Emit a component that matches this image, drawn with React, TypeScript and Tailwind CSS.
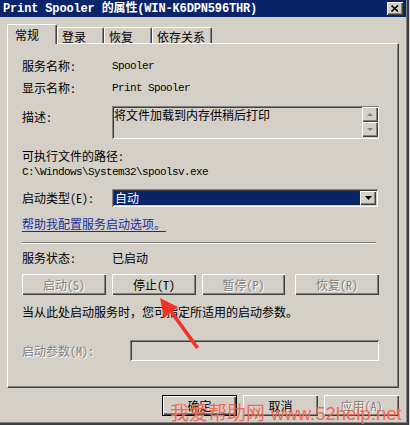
import React from 'react';

const raised = 'bg-[#d4d0c8] shadow-[inset_1px_1px_#fff,inset_-1px_-1px_#404040,inset_-2px_-2px_#808080]';
const sunken = 'shadow-[inset_1px_1px_#808080,inset_-1px_-1px_#fff,inset_2px_2px_#404040,inset_-2px_-2px_#d4d0c8]';
const dim = 'text-[#808080] [text-shadow:1px_1px_0_#fff]';

function Btn({ label, w, disabled, def }: { label: string; w: string; disabled?: boolean; def?: boolean }) {
  return (
    <div
      className={`${w} h-[21px] flex items-center justify-center leading-[16px] ${raised} ${
        def ? 'border border-black' : ''
      } ${disabled ? dim : 'text-black'}`}
    >
      {label}
    </div>
  );
}

function Tab({ label, w, active }: { label: string; w: string; active?: boolean }) {
  return (
    <div
      className={`${w} bg-[#d4d0c8] border-l border-t border-white border-r border-r-[#404040] rounded-t-[2px] shadow-[inset_-1px_0_#808080] leading-[16px] ${
        active ? 'h-[20px] -mb-[1px] relative z-10 pl-[7px] pt-[2px]' : 'h-[16px] pl-[4px] pt-[1px]'
      }`}
    >
      {label}
    </div>
  );
}

export default function App() {
  return (
    <div className="w-[410px] h-[425px] bg-[#d4d0c8] relative overflow-hidden flex text-[12px] text-black font-['Noto_Sans_Mono_CJK_SC','Liberation_Mono','Noto_Sans_CJK_SC',monospace]">
      <div className="w-[409px] h-[425px] flex flex-col border-r-2 border-r-[#404040] border-b-2 border-b-[#404040] shadow-[inset_-1px_-1px_#808080]">
        {/* title bar */}
        <div className="h-[17px] mr-[1px] bg-[#0a246a] flex items-center pl-[3px]">
          <span className="text-white font-bold text-[12px] tracking-[-0.15px] font-['Liberation_Mono','Noto_Sans_CJK_SC',monospace] leading-[16px]">
            Print Spooler 的属性(WIN-K6DPN596THR)
          </span>
          <div className={`ml-auto mr-[3px] w-[16px] h-[13px] flex items-center justify-center ${raised}`}>
            <svg width="8" height="7" viewBox="0 0 8 7">
              <path d="M0.5 0.5 L7 6.5 M7 0.5 L0.5 6.5" stroke="#000" strokeWidth="1.6" />
            </svg>
          </div>
        </div>

        {/* tabs */}
        <div className="h-[26px] flex items-end pl-[7px]">
          <Tab label="常规" w="w-[50px]" active />
          <Tab label="登录" w="w-[47px]" />
          <Tab label="恢复" w="w-[48px]" />
          <Tab label="依存关系" w="w-[60px]" />
        </div>

        {/* panel */}
        <div className="ml-[7px] w-[392px] h-[345px] border border-white border-r-[#404040] border-b-[#404040] shadow-[inset_-1px_-1px_#808080] pl-[14px] pt-[14px] flex flex-col leading-[16px]">
          <div className="flex h-[16px]">
            <div className="w-[90px]">服务名称:</div>
            <div className="text-[11px] tracking-[-0.6px] font-['Liberation_Mono',monospace]">Spooler</div>
          </div>
          <div className="flex h-[16px] mt-[6px]">
            <div className="w-[90px]">显示名称:</div>
            <div className="text-[11px] tracking-[-0.6px] font-['Liberation_Mono',monospace]">Print Spooler</div>
          </div>
          <div className="flex mt-[10px]">
            <div className="w-[90px] mt-[3px]">描述:</div>
            <div className={`w-[267px] h-[33px] flex ${sunken} pl-[2px] pt-[1px]`}>
              <div className="flex-1">将文件加载到内存供稍后打印</div>
              <div className="flex flex-col w-[16px] mr-[1px]">
                <div className={`h-[15px] flex items-center justify-center ${raised}`}>
                  <svg width="6" height="4" viewBox="0 0 6 4">
                    <path d="M3 0 L6 3 L0 3 Z" fill="#808080" />
                  </svg>
                </div>
                <div className={`h-[15px] flex items-center justify-center ${raised}`}>
                  <svg width="6" height="4" viewBox="0 0 6 4">
                    <path d="M0 0 L6 0 L3 3 Z" fill="#808080" />
                  </svg>
                </div>
              </div>
            </div>
          </div>
          <div className="h-[16px] mt-[9px]">可执行文件的路径:</div>
          <div className="h-[16px] text-[11px] tracking-[-0.6px] font-['Liberation_Mono',monospace]">
            C:\Windows\System32\spoolsv.exe
          </div>
          <div className="flex items-center mt-[9px]">
            <div className="w-[90px]">启动类型(E):</div>
            <div className={`w-[266px] h-[18px] flex p-[2px] bg-white ${sunken}`}>
              <div className="flex-1 bg-[#0a246a] text-white leading-[14px] pl-[1px]">自动</div>
              <div className={`w-[16px] flex items-center justify-center ${raised}`}>
                <svg width="7" height="4" viewBox="0 0 7 4">
                  <path d="M0 0 L7 0 L3.5 4 Z" fill="#000" />
                </svg>
              </div>
            </div>
          </div>
          <div className="h-[16px] mt-[9px]">
            <span className="text-[#1a2b9c] underline underline-offset-[2px]">帮助我配置服务启动选项。</span>
          </div>
          <div className="w-[354px] h-[2px] mt-[10px] border-t border-t-[#808080] border-b border-b-white" />
          <div className="flex h-[16px] mt-[6px]">
            <div className="w-[90px]">服务状态:</div>
            <div>已启动</div>
          </div>
          <div className="flex mt-[8px]">
            <Btn label="启动(S)" w="w-[84px]" disabled />
            <div className="ml-[6px]">
              <Btn label="停止(T)" w="w-[84px]" />
            </div>
            <div className="ml-[6px]">
              <Btn label="暂停(P)" w="w-[83px]" disabled />
            </div>
            <div className="ml-[10px]">
              <Btn label="恢复(R)" w="w-[84px]" disabled />
            </div>
          </div>
          <div className="h-[16px] mt-[9px]">当从此处启动服务时，您可指定所适用的启动参数。</div>
          <div className="flex items-center mt-[20px]">
            <div className={`w-[108px] ${dim}`}>启动参数(M):</div>
            <div className={`w-[249px] h-[21px] ${sunken}`} />
          </div>
        </div>

        {/* dialog buttons */}
        <div className="flex mt-[7px] pl-[162px] gap-[6px]">
          <Btn label="确定" w="w-[75px]" def />
          <Btn label="取消" w="w-[75px]" />
          <Btn label="应用(A)" w="w-[75px]" disabled />
        </div>
      </div>

      {/* watermark */}
      <div className="absolute left-[170px] top-[401px] flex items-baseline text-[#ef6a55] text-[19px] leading-[22px] whitespace-nowrap">
        <span className="font-['Noto_Sans_CJK_SC',sans-serif] font-normal">我爱帮助网</span>
        <span className="ml-[6px] font-['Liberation_Sans',sans-serif] text-[18.5px]">www.52help.net</span>
      </div>

      {/* red arrow */}
      <svg className="absolute left-0 top-0 pointer-events-none" width="410" height="425">
        <polygon
          points="160,298 164,318 170,313 196,349 199,347 173,311 178,307"
          fill="#f0342a"
        />
      </svg>
    </div>
  );
}
